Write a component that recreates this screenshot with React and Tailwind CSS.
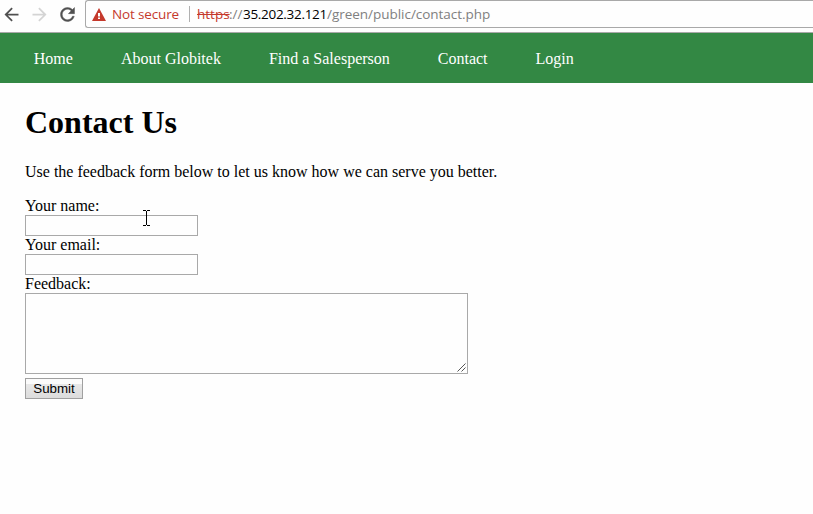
const NAV_LINKS = ['Home', 'About Globitek', 'Find a Salesperson', 'Contact', 'Login'];

function ToolbarIcon({ d, className }) {
  return (
    <svg viewBox="0 0 24 24" className={`h-[21px] w-[21px] shrink-0 fill-current ${className}`}>
      <path d={d} />
    </svg>
  );
}

function BrowserBar() {
  return (
    <div className="flex h-[33px] items-start overflow-hidden border-b border-[#a9a9a9] bg-[#fefefe]">
      <div className="flex w-[85px] shrink-0 gap-[7px] pt-[3.5px] pl-[0.5px]">
        <ToolbarIcon className="text-[#505050]" d="M20 11H7.83l5.59-5.59L12 4l-8 8 8 8 1.41-1.41L7.83 13H20v-2z" />
        <ToolbarIcon className="text-[#d4d4d4]" d="M12 4l-1.41 1.41L16.17 11H4v2h12.17l-5.58 5.59L12 20l8-8z" />
        <ToolbarIcon
          className="text-[#505050] stroke-current stroke-[0.5]"
          d="M17.65 6.35C16.2 4.9 14.21 4 12 4c-4.42 0-7.99 3.58-7.99 8s3.57 8 7.99 8c3.73 0 6.84-2.55 7.73-6h-2.08c-.82 2.33-3.04 4-5.65 4-3.31 0-6-2.69-6-6s2.69-6 6-6c1.66 0 3.14.69 4.22 1.78L13 11h7V4l-2.35 2.35z"
        />
      </div>
      <div className="flex h-7 flex-1 items-center rounded-l-[3px] border border-r-0 border-[#a9a9a9] pl-[6px] font-['Open_Sans','Noto_Sans',sans-serif] text-[13.5px] leading-[26px] whitespace-nowrap">
        <svg viewBox="0 0 14 13" className="h-[13px] w-[14px] shrink-0">
          <path d="M7 0 14 13H0z" fill="#c5392c" />
          <path d="M6 5h2v3.500H6zM6 9.500h2v1.500H6z" fill="#fff" />
        </svg>
        <span className="ml-[6px] w-[67px] tracking-[-0.15px] text-[#c5392c]">Not secure</span>
        <span className="ml-[10px] h-4 w-px bg-[#b0b0b0]" />
        <span className="ml-[7px] w-[32px] text-[#c5392c] line-through">https</span>
        <span className="w-[14px] text-[#808080]">://</span>
        <span className="w-[84px] tracking-[-0.3px] text-black">35.202.32.121</span>
        <span className="tracking-[-0.03px] text-[#808080]">/green/public/contact.php</span>
      </div>
    </div>
  );
}

function TextField({ label }) {
  return (
    <label className="block">
      <span className="block h-[18px] leading-[18px]">{label}</span>
      <input type="text" className="block h-[21px] w-[173px] border border-[#a9a9a9] bg-[#fefefe] px-px" />
    </label>
  );
}

function TextCursor() {
  return (
    <svg viewBox="0 0 7 16" className="absolute top-[210px] left-[143px] h-4 w-[7px]" shapeRendering="crispEdges">
      <path d="M0 0h3v1H0zM4 0h3v1H4zM3 1h1v14H3zM0 15h3v1H0zM4 15h3v1H4z" fill="#000" />
    </svg>
  );
}

export default function App() {
  return (
    <div className="relative h-[514px] w-[813px] overflow-hidden bg-[#fefefe] font-['Liberation_Serif',serif] text-base text-black">
      <BrowserBar />
      <nav className="flex h-[50px] items-center gap-12 bg-[#338844] pt-[2px] pl-[33.8px] leading-[18px] text-white">
        {NAV_LINKS.map((link) => (
          <a key={link}>{link}</a>
        ))}
      </nav>
      <main className="pl-[25px]">
        <h1 className="pt-[21px] text-[32px] leading-[37px] font-bold">Contact Us</h1>
        <p className="mt-[22px] leading-[18px]">Use the feedback form below to let us know how we can serve you better.</p>
        <form className="mt-4">
          <TextField label="Your name:" />
          <TextField label="Your email:" />
          <label className="block">
            <span className="block h-[18px] leading-[18px]">Feedback:</span>
            <div className="flex h-[81px] w-[443px] items-end justify-end border border-[#a9a9a9] bg-[#fefefe]">
              <textarea className="h-full flex-1 resize-none p-0.5 outline-none" />
              <svg viewBox="0 0 9 9" className="mr-px mb-px h-[9px] w-[9px]" stroke="#555" fill="none">
                <path d="M.5 8.500l8-8M4.500 8.500l4-4" />
              </svg>
            </div>
          </label>
          <button
            type="button"
            className="mt-1 block h-[21px] w-[58px] border border-[#a0a0a0] bg-linear-to-b from-[#fbfbfb] from-28% via-[#e8e8e8] via-28% to-[#dcdcdc] font-['Liberation_Sans',sans-serif] text-[13.333px] leading-[19px]"
          >
            Submit
          </button>
        </form>
      </main>
      <TextCursor />
    </div>
  );
}
